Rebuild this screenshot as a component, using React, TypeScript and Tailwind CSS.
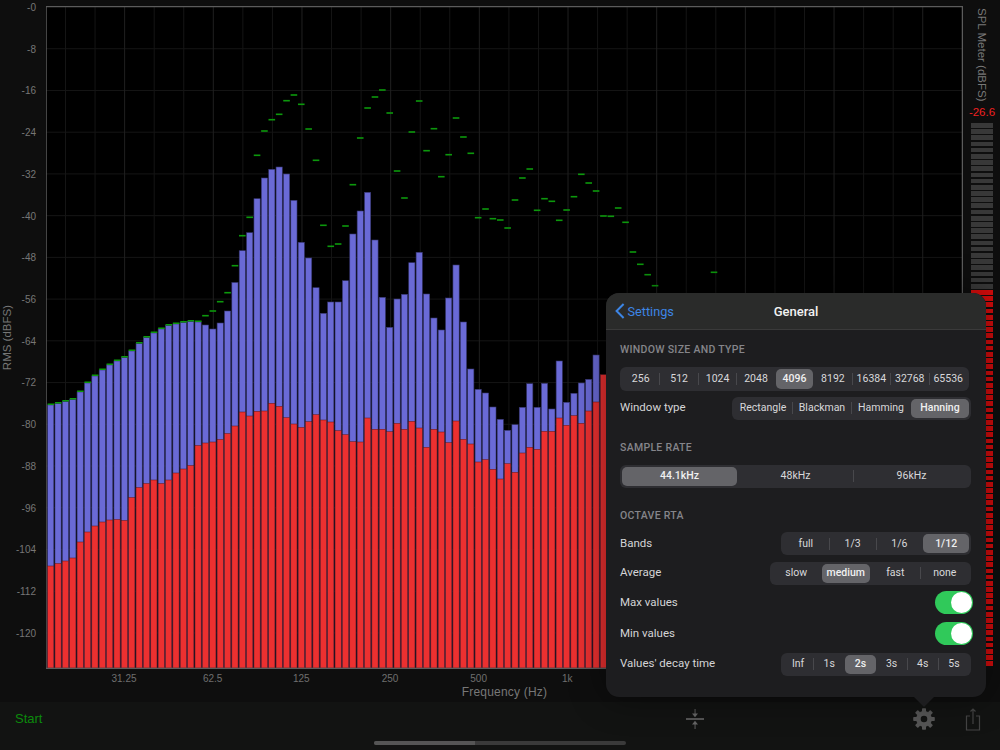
const blueTops = [
  405, 403.5, 401.5, 399.5, 392, 383, 376, 370, 365, 361, 357.5, 351, 343.5, 337.5, 333, 329, 325.5, 324, 322.5,
  321.5, 322, 325, 329, 323, 311, 282.5, 250.7, 232.7, 198.7, 178, 169.3, 167, 174, 200.3, 242.3, 258, 287.7, 313.3,
  302, 302, 280.7, 234, 211, 192.3, 240, 297.3, 327.3, 299, 294.3, 262.7, 252.3, 294, 318, 330, 298, 265, 322, 369,
  389.3, 393, 407, 419.3, 430.3, 424.7, 407.3, 383.7, 407.3, 383.3, 409, 361, 402.3, 393.3, 383, 379.3, 355, 375,
];

const redTops = [
  566, 563.5, 561, 558, 542, 532, 526, 522, 520, 519.5, 520.5, 497.5, 487.5, 483.5, 480, 483.5, 480, 473, 469, 465.5,
  445.5, 443, 442, 439.5, 433.5, 426, 412, 416, 411.3, 411, 403.3, 406.3, 417.7, 424, 427.3, 421.7, 414.7, 420, 422,
  430.7, 434.7, 441.7, 442, 418, 429.3, 429.3, 431.7, 423.3, 429.3, 421.3, 428, 447.3, 429.3, 432, 442.7, 421, 439.3,
  444, 462, 459.7, 469.3, 479, 463.7, 472.3, 453, 447.3, 449.3, 431.3, 431.3, 418, 425.3, 415.7, 423.3, 411, 402, 374.7,
];

// max values that float above the bars, by bar index
const maxTicks: [number, number][] = [
  [21, 315.7], [22, 311], [23, 301.7], [24, 292.7], [25, 265.7], [26, 235.7], [27, 217.3], [28, 155.3], [29, 131],
  [30, 119.7], [31, 114.3], [32, 100.7], [33, 95], [34, 104.3], [35, 129], [36, 160.3], [37, 225.3], [38, 246.3],
  [39, 244], [40, 226], [41, 184.7], [42, 138], [43, 108], [44, 97], [45, 90], [46, 113], [47, 171], [48, 198],
  [49, 132], [50, 101], [51, 150.7], [52, 128.7], [53, 176.7], [54, 154.7], [55, 118], [56, 137], [57, 153.3],
  [58, 217.7], [59, 209], [60, 218.7], [61, 220], [62, 228], [63, 200], [64, 178], [65, 169], [66, 210.3], [67, 198.7],
  [68, 201.3], [69, 220.3], [70, 210], [71, 196.7], [72, 174.3], [73, 183], [74, 191], [75, 216], [76, 216.3], [77, 208],
  [78, 222.3], [79, 252], [80, 264.3], [81, 274.7], [82, 285.7], [90, 272.3],
];

const dbLabels = ["-0", "-8", "-16", "-24", "-32", "-40", "-48", "-56", "-64", "-72", "-80", "-88", "-96", "-104", "-112", "-120"];
const freqLabels = ["31.25", "62.5", "125", "250", "500", "1k", "2k", "4k", "8k"];

const barX = (i: number) => 47.6 + i * 7.37;
const meterBlocks = Array.from({ length: 88 }, (_, i) => i);

const Spectrum = () => (
  <svg viewBox="46 6 917 663" className="block w-[917px] h-[663px] bg-black">
    {Array.from({ length: 16 }, (_, i) => (
      <line key={i} x1="46" x2="963" y1={7 + (i + 1) * 41.73} y2={7 + (i + 1) * 41.73} stroke="#151515" />
    ))}
    {Array.from({ length: 30 }, (_, i) => {
      const x = 65.5 + i * 29.56;
      return <line key={i} x1={x} x2={x} y1="6" y2="669" stroke={i % 3 === 2 ? "#202020" : "#151515"} />;
    })}
    {blueTops.map((top, i) => (
      <rect key={i} x={barX(i)} y={top} width="6.2" height={668 - top} fill="#6a6ad6" stroke="#36366e" strokeWidth="0.6" />
    ))}
    {redTops.map((top, i) => (
      <rect key={i} x={barX(i)} y={top} width="6.2" height={668 - top} fill="#ec3030" stroke="#5e1616" strokeWidth="0.5" />
    ))}
    {blueTops.slice(0, 21).map((top, i) => (
      <rect key={i} x={barX(i)} y={top - 1.5} width="6.6" height="1.5" fill="#0d9a0d" />
    ))}
    {maxTicks.map(([i, y]) => (
      <rect key={i} x={barX(i) - 0.2} y={y - 0.8} width="6.6" height="1.6" fill="#0c980c" />
    ))}
    <rect x="46" y="6.5" width="916.5" height="662" fill="none" stroke="#5c5c5c" strokeWidth="1.5" />
  </svg>
);

const Segmented = ({
  items,
  selected,
  className,
}: {
  items: string[];
  selected: number;
  className: string;
}) => (
  <div className={`flex items-center rounded-[6px] bg-[#2e2e32] p-[2px] text-[10.5px] text-[#d8d8da] ${className}`}>
    {items.map((item, i) => (
      <div key={item} className="contents">
        {i > 0 && (
          <div className={`w-px h-3 shrink-0 ${i === selected || i - 1 === selected ? "bg-transparent" : "bg-[#48484c]"}`} />
        )}
        <div
          className={`flex-1 h-full flex items-center justify-center rounded-[5px] ${
            i === selected ? "bg-[#646468] font-medium text-[#f0f0f0]" : ""
          }`}
        >
          {item}
        </div>
      </div>
    ))}
  </div>
);

const Toggle = () => (
  <div className="w-[38px] h-[23px] rounded-full bg-[#30c95a] flex items-center justify-end pr-[1px]">
    <div className="w-[21px] h-[21px] rounded-full bg-white" />
  </div>
);

const SectionLabel = ({ children, className }: { children: string; className: string }) => (
  <div className={`h-[13px] leading-[13px] text-[10.5px] font-medium tracking-[0.3px] text-[#85858a] ${className}`}>{children}</div>
);

const Row = ({ label, className, children }: { label: string; className: string; children: React.ReactNode }) => (
  <div className={`flex items-center justify-between h-[23px] ${className}`}>
    <span className="text-[11.5px] text-[#d4d4d6]">{label}</span>
    {children}
  </div>
);

const SettingsPopover = () => (
  <div className="absolute left-[606px] top-[293px] w-[380px] h-[404px] rounded-[13px] bg-[#1d1d1f] shadow-[0_0_36px_rgba(0,0,0,0.45)] font-['Roboto',sans-serif]">
    <div className="grid grid-cols-3 items-center h-[37px] pt-[1px] rounded-t-[13px] bg-[#2a2b2a] border-b border-[#3a3a3a]">
      <div className="flex items-center pl-[9px] gap-[2.5px] text-[12.7px] text-[#3d86e6]">
        <svg width="10" height="16" viewBox="0 0 10 16" fill="none" stroke="#3d86e6" strokeWidth="2">
          <path d="M8.6 1 1.6 8l7 7" />
        </svg>
        Settings
      </div>
      <div className="text-center text-[13px] font-medium text-[#f2f2f2]">General</div>
    </div>
    <div className="pl-[14px] pr-[15px]">
      <SectionLabel className="mt-[13px]">WINDOW SIZE AND TYPE</SectionLabel>
      <Segmented
        className="mt-[11px] h-[23.5px] w-[349px]"
        items={["256", "512", "1024", "2048", "4096", "8192", "16384", "32768", "65536"]}
        selected={4}
      />
      <Row label="Window type" className="mt-[6px]">
        <Segmented className="h-full w-[239px]" items={["Rectangle", "Blackman", "Hamming", "Hanning"]} selected={3} />
      </Row>
      <SectionLabel className="mt-[21px]">SAMPLE RATE</SectionLabel>
      <Segmented className="mt-[11px] h-[23px] w-[351px]" items={["44.1kHz", "48kHz", "96kHz"]} selected={0} />
      <SectionLabel className="mt-[21px]">OCTAVE RTA</SectionLabel>
      <Row label="Bands" className="mt-[10.5px]">
        <Segmented className="h-full w-[190px]" items={["full", "1/3", "1/6", "1/12"]} selected={3} />
      </Row>
      <Row label="Average" className="mt-[6.5px]">
        <Segmented className="h-full w-[201px]" items={["slow", "medium", "fast", "none"]} selected={1} />
      </Row>
      <Row label="Max values" className="mt-[6.5px] -mr-[2px]">
        <Toggle />
      </Row>
      <Row label="Min values" className="mt-[8px] -mr-[2px]">
        <Toggle />
      </Row>
      <Row label="Values' decay time" className="mt-[7.5px]">
        <Segmented className="h-full w-[190px]" items={["Inf", "1s", "2s", "3s", "4s", "5s"]} selected={2} />
      </Row>
    </div>
    <div className="absolute left-[308px] top-full w-0 h-0 border-x-[10px] border-x-transparent border-t-[10px] border-t-[#1d1d1f]" />
  </div>
);

export default function App() {
  return (
    <div className="relative w-[1000px] h-[750px] overflow-hidden bg-[#0e0e0e] font-['Liberation_Sans',sans-serif]">
      <div className="flex h-[702px] pt-[6px]">
        <div className="flex w-[46px] shrink-0 h-[663px] text-[10px] text-[#767676]">
          <div className="w-[16px] flex items-center justify-center">
            <span className="[writing-mode:vertical-rl] rotate-180 whitespace-nowrap text-[11.5px]">RMS (dBFS)</span>
          </div>
          <div className="w-[20px] flex flex-col items-end gap-[29.73px] -mt-[4px]">
            {dbLabels.map((label) => (
              <div key={label} className="h-[12px] leading-[12px] whitespace-nowrap">
                {label}
              </div>
            ))}
          </div>
        </div>

        <div className="w-[917px] shrink-0">
          <Spectrum />
          <div className="flex pl-[33.7px] mt-[4px] h-[12px] text-[10px] leading-[12px] text-[#6e6e6e]">
            {freqLabels.map((label) => (
              <div key={label} className="w-[88.67px] shrink-0 text-center">
                {label}
              </div>
            ))}
          </div>
          <div className="text-center text-[12px] leading-[14px] text-[#777777] tracking-[0.2px]">Frequency (Hz)</div>
        </div>

        <div className="w-[37px] shrink-0 flex flex-col items-center -mt-[6px]">
          <span className="[writing-mode:vertical-rl] mt-[8px] h-[91px] text-[11.5px] leading-[14px] text-[#787878] whitespace-nowrap ml-[1px]">
            SPL Meter (dBFS)
          </span>
          <div className="mt-[6px] h-[14px] leading-[14px] text-[11.5px] text-[#f02020] ml-[1px]">-26.6</div>
          <div className="mt-[4px] w-[22px] flex flex-col gap-[1.5px]">
            {meterBlocks.map((i) => (
              <div key={i} className={`h-[4.7px] ${i < 27 ? "bg-[#383838]" : "bg-[#d60c0c]"}`} />
            ))}
          </div>
        </div>
      </div>

      <div className="h-[48px] bg-[#121312]">
        <div className="flex items-center h-[34px] pl-[15px] pr-[18px]">
          <span className="text-[13px] text-[#0c8a0c]">Start</span>
          <svg className="ml-auto" width="20" height="22" viewBox="0 0 20 22" fill="#666666">
            <rect x="1" y="10.2" width="18" height="1.6" />
            <rect x="9.6" y="1" width="0.9" height="5" />
            <path d="M7 5.5h6L10 9.2zM7 16.5h6L10 12.8z" />
            <rect x="9.6" y="16" width="0.9" height="5" />
          </svg>
          <svg className="ml-[207px]" width="24" height="24" viewBox="0 0 24 24" fill="#565656">
            {[0, 45, 90, 135, 180, 225, 270, 315].map((angle) => (
              <rect key={angle} x="10" y="1.2" width="4" height="5" rx="0.8" transform={`rotate(${angle} 12 12)`} />
            ))}
            <circle cx="12" cy="12" r="5.6" fill="none" stroke="#565656" strokeWidth="4.6" />
          </svg>
          <svg className="ml-[28px]" width="18" height="24" viewBox="0 0 18 24" fill="none" stroke="#444444" strokeWidth="1.2">
            <path d="M6 9H2.5v14h13V9H12" />
            <path d="M9 17V2M6.5 4.5 9 2l2.5 2.5" />
          </svg>
        </div>
      </div>

      <SettingsPopover />
      <div className="absolute left-[374px] top-[741px] w-[252px] h-[4px] rounded-full bg-[#3a3a3a]">
        <div className="w-[101px] h-full rounded-l-full bg-[#555555]" />
      </div>
    </div>
  );
}
